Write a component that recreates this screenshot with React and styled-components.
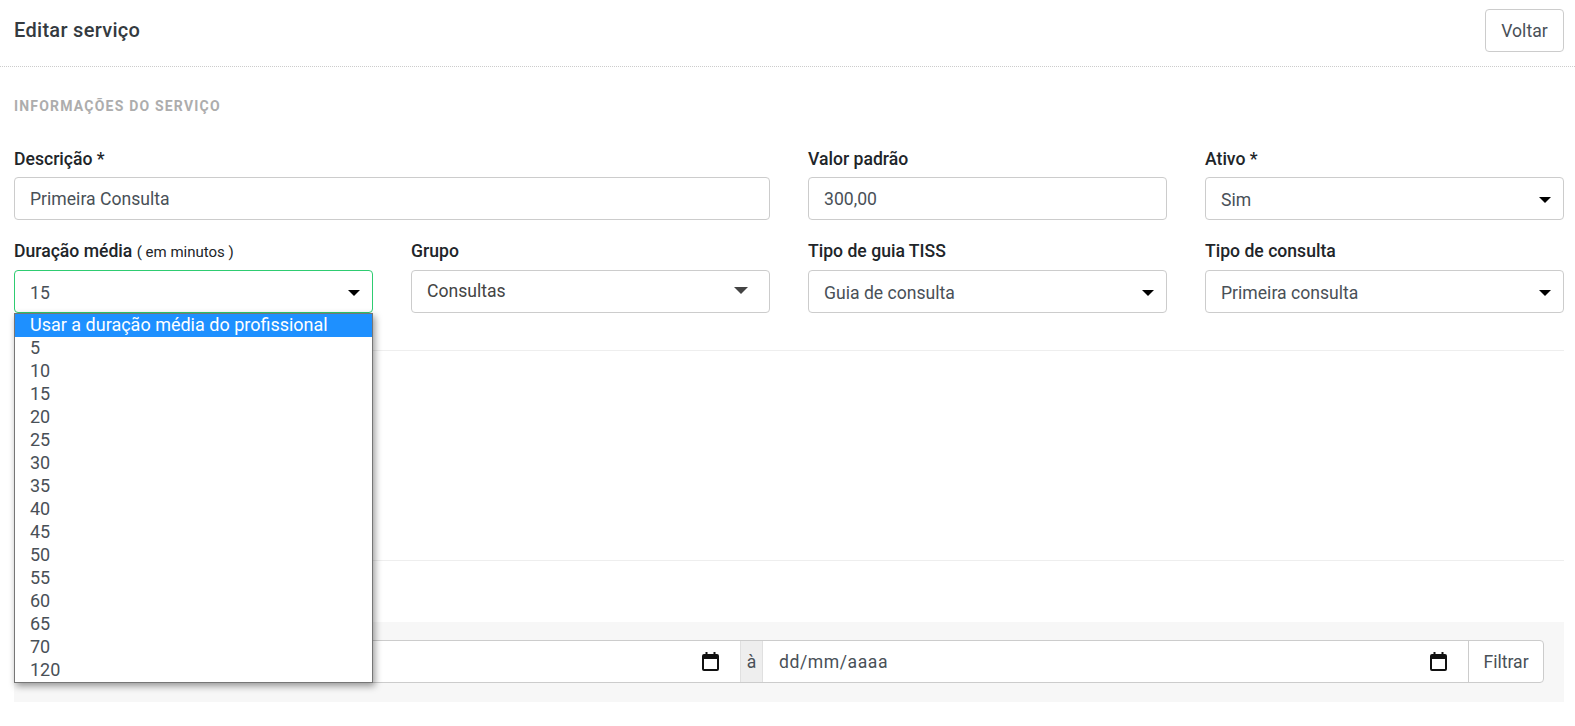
import React from 'react';
import styled, { createGlobalStyle } from 'styled-components';

const GlobalStyle = createGlobalStyle`
  html, body {
    margin: 0;
    height: 726px;
    overflow: hidden;
    background: #fff;
    font-family: Roboto, "Liberation Sans", sans-serif;
  }
`;

const Page = styled.div`
  display: flex;
  flex-direction: column;
  padding: 0 11px 0 14px;
`;

const Header = styled.header`
  display: flex;
  align-items: flex-start;
  justify-content: space-between;
  height: 57px;
  margin: 0 -11px 0 -14px;
  padding: 9px 11px 0 14px;
  border-bottom: 1px dotted #ccc;
`;

const Title = styled.h1`
  margin: 0;
  font-size: 20px;
  line-height: 43px;
  font-weight: 500;
  letter-spacing: 0.3px;
  color: #343a40;
`;

const BackButton = styled.button`
  width: 79px;
  height: 43px;
  padding: 0;
  background: #fff;
  border: 1px solid #ccc;
  border-radius: 4px;
  font: 400 17.6px Roboto, sans-serif;
  color: #495057;
`;

const SectionTitle = styled.h2`
  margin: 31px 0 0;
  height: 16px;
  font-size: 14px;
  line-height: 17px;
  font-weight: 700;
  letter-spacing: 1.2px;
  text-transform: uppercase;
  color: #adadad;
`;

const FormGrid = styled.div`
  display: grid;
  grid-template-columns: repeat(4, 359px);
  column-gap: 38px;
  row-gap: 21px;
  margin-top: 35px;
`;

const Field = styled.div`
  position: relative;
  grid-column: span ${(p) => p.$span || 1};
`;

const Label = styled.div`
  height: 21px;
  margin-bottom: ${(p) => (p.$tight ? 7 : 8)}px;
  font-size: 17.6px;
  line-height: 21px;
  font-weight: 500;
  color: #212529;
`;

const Hint = styled.span`
  font-size: 15px;
  font-weight: 400;
`;

const Control = styled.div`
  display: flex;
  align-items: center;
  justify-content: space-between;
  box-sizing: border-box;
  height: 43px;
  padding: 0 12px 0 15px;
  border: 1px solid ${(p) => (p.$focused ? '#2ecc71' : '#ccc')};
  border-radius: 4px;
  background: #fff;
  font-size: 17.6px;
  color: #495057;
`;

const SelectControl = styled(Control)`
  padding-top: 2px;
`;

const GroupControl = styled(Control)`
  padding-right: 21px;
  padding-bottom: 2px;
  color: #444;
`;

const Arrow = styled.span`
  width: 0;
  height: 0;
  border-left: 6.5px solid transparent;
  border-right: 6.5px solid transparent;
  border-top: 6px solid #000;
`;

const GroupArrow = styled.span`
  width: 0;
  height: 0;
  margin-top: -1px;
  border-left: 7px solid transparent;
  border-right: 7px solid transparent;
  border-top: 7px solid #444;
`;

const Dropdown = styled.ul`
  position: absolute;
  z-index: 10;
  top: 72px;
  left: 0;
  width: 359px;
  box-sizing: border-box;
  margin: 0;
  padding: 0;
  list-style: none;
  background: #fff;
  border: 1px solid #767676;
  box-shadow: 2px 3px 7px rgba(0, 0, 0, 0.4);
`;

const Option = styled.li`
  height: 23px;
  padding-left: 15px;
  font-size: 18px;
  line-height: 21px;
  color: ${(p) => (p.$active ? '#fff' : '#495057')};
  background: ${(p) => (p.$active ? '#1e90ff' : 'transparent')};
`;

const Divider = styled.hr`
  height: 1px;
  margin: ${(p) => p.$top}px 0 0;
  border: 0;
  background: #eee;
`;

const FilterPanel = styled.div`
  margin-top: 61px;
  padding: 18px 20px 19px;
  background: #f7f7f7;
`;

const DateGroup = styled.div`
  display: flex;
  height: 43px;
  background: #fff;
  border: 1px solid #ccc;
  border-radius: 4px;
  box-sizing: border-box;
  color: #495057;
  font-size: 17.6px;
`;

const DateInput = styled.div`
  flex: 1;
  display: flex;
  align-items: center;
  justify-content: space-between;
  padding: 0 21px 0 16px;
  letter-spacing: 0.55px;

  svg {
    margin-left: auto;
  }
`;

const Joiner = styled.div`
  display: flex;
  align-items: center;
  justify-content: center;
  width: 23px;
  box-sizing: border-box;
  background: #eee;
  border-left: 1px solid #e0e0e0;
  border-right: 1px solid #e0e0e0;
`;

const FilterButton = styled.div`
  display: flex;
  align-items: center;
  justify-content: center;
  width: 75px;
  box-sizing: border-box;
  border-left: 1px solid #ccc;
`;

const CalendarIcon = () => (
  <svg width="17" height="19" viewBox="0 0 17 19" fill="#111">
    <path d="M3.5 0h2v2h6V0h2v2H15a2 2 0 0 1 2 2v13a2 2 0 0 1-2 2H2a2 2 0 0 1-2-2V4a2 2 0 0 1 2-2h1.500V0zM2 7v10h13V7H2z" />
  </svg>
);

const durations = ['Usar a duração média do profissional', '5', '10', '15', '20', '25', '30', '35', '40', '45', '50', '55', '60', '65', '70', '120'];

const App = () => (
  <>
    <GlobalStyle />
    <Page>
      <Header>
        <Title>Editar serviço</Title>
        <BackButton>Voltar</BackButton>
      </Header>
      <SectionTitle>Informações do serviço</SectionTitle>
      <FormGrid>
        <Field $span={2}>
          <Label $tight>Descrição *</Label>
          <Control>Primeira Consulta</Control>
        </Field>
        <Field>
          <Label $tight>Valor padrão</Label>
          <Control>300,00</Control>
        </Field>
        <Field>
          <Label $tight>Ativo *</Label>
          <SelectControl>Sim<Arrow /></SelectControl>
        </Field>
        <Field>
          <Label>Duração média <Hint>( em minutos )</Hint></Label>
          <SelectControl $focused>15<Arrow /></SelectControl>
          <Dropdown>
            {durations.map((item, index) => (
              <Option key={item} $active={index === 0}>{item}</Option>
            ))}
          </Dropdown>
        </Field>
        <Field>
          <Label>Grupo</Label>
          <GroupControl>Consultas<GroupArrow /></GroupControl>
        </Field>
        <Field>
          <Label>Tipo de guia TISS</Label>
          <SelectControl>Guia de consulta<Arrow /></SelectControl>
        </Field>
        <Field>
          <Label>Tipo de consulta</Label>
          <SelectControl>Primeira consulta<Arrow /></SelectControl>
        </Field>
      </FormGrid>
      <Divider $top={37} />
      <Divider $top={209} />
      <FilterPanel>
        <DateGroup>
          <DateInput><CalendarIcon /></DateInput>
          <Joiner>à</Joiner>
          <DateInput>dd/mm/aaaa<CalendarIcon /></DateInput>
          <FilterButton>Filtrar</FilterButton>
        </DateGroup>
      </FilterPanel>
    </Page>
  </>
);

export default App;
